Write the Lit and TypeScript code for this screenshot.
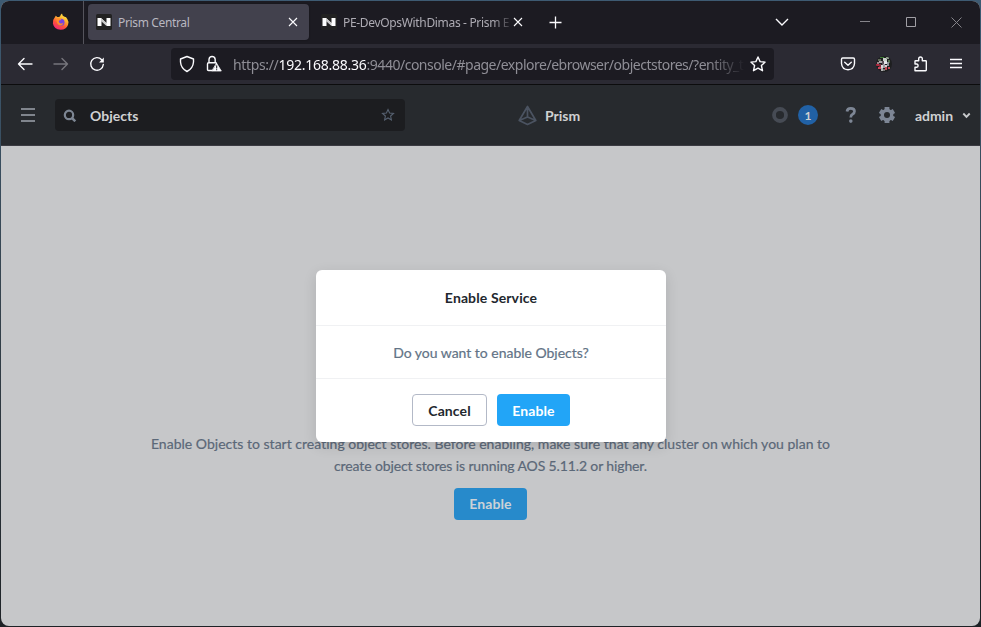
import { LitElement, html, css, svg } from "lit";
import { customElement } from "lit/decorators.js";

const nLogo = html`<svg class="fav" viewBox="0 0 16 16" width="16" height="16"><rect width="16" height="16" rx="1.5" fill="#222"/><path d="M1.5 4H5L10.5 9V4H14.5V12H11L5.500 7V12H1.500Z" fill="#fff"/><path d="M5 4L10.500 9V12L5 7Z" fill="#c9c9c9"/></svg>`;
const closeX = html`<svg class="x" viewBox="0 0 10 10" width="10" height="10"><path d="M1 1L9 9M9 1L1 9" stroke="#fbfbfe" stroke-width="1.1" fill="none"/></svg>`;
const faceDots: [number, number, number, number, string][] = [
  [2, 3, 3, 2, "#5f6a58"], [4, 1, 4, 1, "#3d7a35"], [7, 2, 4, 3, "#c9d0c8"], [10, 1, 3, 2, "#8b9a88"], [12, 4, 2, 3, "#55704c"],
  [1, 6, 2, 2, "#98888c"], [3, 5, 3, 2, "#a9a5a8"], [6, 5, 2, 4, "#5a5058"], [8, 5, 3, 3, "#e3e6e8"], [11, 6, 2, 4, "#8d949a"],
  [0, 8, 3, 2, "#b22840"], [3, 8, 2, 3, "#80303c"], [5, 9, 2, 3, "#d9d9d9"], [7, 8, 2, 4, "#9e9ba0"], [9, 9, 2, 2, "#d6cfd0"],
  [2, 11, 3, 2, "#d0455a"], [5, 12, 2, 3, "#b0b0b0"], [7, 13, 2, 2, "#777"], [9, 11, 2, 3, "#c34a55"], [12, 11, 2, 2, "#c94a55"],
];

@customElement("browser-tabs")
class BrowserTabs extends LitElement {
  static styles = css`
    :host { display: flex; height: 43px; background: #1c1b22; font: 12px "Noto Sans", sans-serif; color: #adabb3; }
    svg { display: block; flex: none; }
    .pin { width: 83px; height: 43px; border-right: 1px solid #55545c; box-sizing: border-box; padding: 12px 0 0 51px; }
    .tab { display: flex; align-items: center; height: 36px; margin-top: 3px; border-radius: 4px; box-sizing: border-box; padding: 0 11px 0 8px; }
    .on { background: #42414d; width: 221px; margin-left: 4px; color: #b9b7c0; box-shadow: 0 0 2px #0006; }
    .off { width: 221px; margin-left: 4px; }
    .title { margin-left: 6px; flex: 1; white-space: nowrap; letter-spacing: -0.35px; }
    .off .title { mask-image: linear-gradient(to right, #000 150px, transparent 171px); letter-spacing: -0.33px; }
    .plus { margin: 15px 0 0 15px; }
    .list { margin: 17px 0 0 213px; }
    .min { margin: 15px 0 0 71px; }
    .max { margin: 16px 0 0 36px; }
    .close { margin: 16px 0 0 35px; }
  `;
  render() {
    return html`
      <div class="pin"><svg width="18" height="18" viewBox="0 0 18 18">
        <defs><linearGradient id="fire" x1=".8" y1="0" x2=".25" y2="1"><stop offset="0" stop-color="#fff44f"/><stop offset=".35" stop-color="#ffb22e"/><stop offset=".65" stop-color="#ff5638"/><stop offset="1" stop-color="#f0207f"/></linearGradient></defs>
        <path d="M3.700 2.700Q4.500 3 5.200 4Q7 4 8 3.500Q8.500 1.600 10 .6Q10.300 3 12 3.600Q14.500 4 15.300 6Q17 8 16 12Q14 17 8.500 16.800Q2 16.300 .9 10.500Q.6 6.500 2.500 4.700Q3 4 3.700 2.700Z" fill="url(#fire)"/>
        <circle cx="9" cy="9.200" r="3.500" fill="#7543e5"/><path d="M4.400 6.200Q7 4.600 9.300 6.200Q8.800 7.300 7 7.600Q6 9 8 10.300Q10.500 11 11.500 9.500Q10.800 12.500 7.800 12.400Q4.500 11.500 4.400 6.200Z" fill="#ff8b2c"/>
      </svg></div>
      <div class="tab on">${nLogo}<span class="title">Prism Central</span>${closeX}</div>
      <div class="tab off">${nLogo}<span class="title">PE-DevOpsWithDimas - Prism E</span>${closeX}</div>
      <svg class="plus" width="13" height="13" viewBox="0 0 13 13"><path d="M6.500 .5V12.500M.5 6.500H12.500" stroke="#fbfbfe" stroke-width="1.3"/></svg>
      <svg class="list" width="14" height="9" viewBox="0 0 14 9"><path d="M1 1L7 7L13 1" stroke="#fbfbfe" stroke-width="1.400" fill="none"/></svg>
      <svg class="min" width="10" height="12" viewBox="0 0 10 12"><path d="M0 5.500H10" stroke="#85848a"/></svg>
      <svg class="max" width="10" height="10" viewBox="0 0 10 10"><path d="M.5 .5H9.500V9.500H.5Z" stroke="#a09fa5" fill="none"/></svg>
      <svg class="close" width="11" height="11" viewBox="0 0 11 11"><path d="M.5 .5L10.500 10.500M10.500 .5L.5 10.500" stroke="#85848a" fill="none"/></svg>
    `;
  }
}

@customElement("browser-toolbar")
class BrowserToolbar extends LitElement {
  static styles = css`
    :host { display: flex; align-items: center; height: 41px; box-sizing: border-box; background: #2b2a33; border-bottom: 1px solid #0c0c0d; }
    svg { display: block; flex: none; fill: none; stroke: #fbfbfe; stroke-width: 1.4; stroke-linecap: round; stroke-linejoin: round; }
    .back { margin-left: 16px; }
    .fwd { margin-left: 20px; stroke: #77767d; }
    .reload { margin-left: 20px; }
    .url { display: flex; align-items: center; margin-left: 66px; width: 603px; height: 32px; border-radius: 4px; background: #1c1b22; box-sizing: border-box; padding: 0 8px; }
    .lock { margin-left: 11px; }
    .addr { margin: 1px 6px 0 11px; flex: 1; min-width: 0; white-space: nowrap; font: 14px "Noto Sans", sans-serif; letter-spacing: -0.49px; color: #8f8e96; mask-image: linear-gradient(to right, #000 475px, transparent 512px); }
    b { font-weight: 400; color: #fbfbfe; letter-spacing: -0.24px; }
    .scheme { letter-spacing: -0.36px; }
    .pocket { margin-left: 66px; }
    .face { margin-left: 20px; stroke: none; }
    .ext { margin-left: 21px; }
    .menu { margin-left: 21px; stroke-linecap: butt; }
  `;
  render() {
    return html`
      <svg class="back" width="16" height="16" viewBox="0 0 16 16"><path d="M15 8H1.500M7 2.500L1.500 8L7 13.500"/></svg>
      <svg class="fwd" width="16" height="16" viewBox="0 0 16 16"><path d="M1 8H14.500M9 2.500L14.500 8L9 13.500"/></svg>
      <svg class="reload" width="16" height="16" viewBox="0 0 16 16"><path d="M12.700 3.700A6.300 6.300 0 1 0 14.300 8.500"/><path d="M14.800 1.600V6.500H10Z" fill="#fbfbfe" stroke="none"/></svg>
      <div class="url">
        <svg width="16" height="18" viewBox="0 0 16 18"><path d="M8 1.500L14.500 4V7Q14 13.500 8 16.500Q2 13.500 1.500 7V4Z"/></svg>
        <svg class="lock" width="16" height="18" viewBox="0 0 16 18"><path d="M6 15.500H2.500Q1.500 15.500 1.500 14.500V9Q1.500 7.800 2.700 7.800H9.500Q10.500 7.800 10.500 8.500M3 7.800V4.500Q3.300 1.500 6 1.500Q9 1.500 9.200 4.500V7.800"/><path d="M10.700 8.500L15.300 16H6.200Z" fill="#fbfbfe" stroke-width=".8"/><path d="M10.700 10.800V13M10.700 14.600V14.700" stroke="#1c1b22" stroke-width="1.100"/></svg>
        <span class="addr"><span class="scheme">https://</span><b>192.168.88.36</b>:9440/console/#page/explore/ebrowser/objectstores/?entity_t</span>
        <svg width="16" height="16" viewBox="0 0 16 16"><path d="M8 1L10.100 5.600L15.100 6.100L11.400 9.500L12.500 14.700L8 12.100L3.500 14.700L4.600 9.500L.9 6.100L5.900 5.600Z"/></svg>
      </div>
      <svg class="pocket" width="16" height="16" viewBox="0 0 16 16"><path d="M2.700 2H13.300Q14.500 2 14.500 3.200V7.500Q14 13.500 8 13.700Q2 13.500 1.500 7.500V3.200Q1.500 2 2.700 2ZM4.700 6.300L8 9.300L11.300 6.300"/></svg>
      <svg class="face" width="16" height="16" viewBox="0 0 16 16"><defs><clipPath id="round"><circle cx="8" cy="8" r="8"/></clipPath></defs><g clip-path="url(#round)"><rect width="16" height="16" fill="#1e1f20"/>${faceDots.map(([x, y, w, h, c]) => svg`<rect x=${x} y=${y} width=${w} height=${h} fill=${c}/>`)}</g></svg>
      <svg class="ext" width="16" height="16" viewBox="0 0 16 16"><path d="M2 14.700V11.300H3.800A1.700 1.700 0 0 0 3.800 8H2V5.300Q2 4.700 2.700 4.700H5.700V2.800A1.800 1.800 0 0 1 9.300 2.800V4.700H12.700Q13.300 4.700 13.300 5.300V14Q13.300 14.700 12.700 14.700Z"/></svg>
      <svg class="menu" width="12" height="16" viewBox="0 0 12 16"><path d="M0 3.500H12M0 7.500H12M0 11.500H12"/></svg>
    `;
  }
}

@customElement("prism-header")
class PrismHeader extends LitElement {
  static styles = css`
    :host { display: flex; align-items: center; height: 61px; box-sizing: border-box; background: #272a2e; border-bottom: 1px solid #3b3b42; color: #d0d1d2; font: 700 14px Lato, sans-serif; }
    svg { display: block; flex: none; }
    .burger { margin-left: 20px; }
    .search { display: flex; align-items: center; width: 350px; height: 32px; margin-left: 20px; border-radius: 4px; background: #1c1d20; box-sizing: border-box; padding: 0 10px 0 8px; }
    .term { flex: 1; margin: 1px 0 1px 13px; letter-spacing: .02px; }
    .logo { margin-left: 113px; }
    .name { margin: 1px 0 1px 8px; width: 36px; }
    .ring { margin-left: 191px; }
    .badge { width: 20px; height: 20px; border-radius: 50%; background: #2161a5; margin-left: 10px; display: grid; place-items: center; font-size: 12px; }
    .help { margin-left: 27px; }
    .gear { margin-left: 21px; }
    .user { margin: 1px 0 1px 19px; width: 40px; letter-spacing: -.05px; }
    .down { margin-left: 7px; }
  `;
  render() {
    return html`
      <svg class="burger" width="14" height="16" viewBox="0 0 14 16"><path d="M0 2H14M0 8H14M0 14H14" stroke="#9fa4ad" stroke-width="1.700"/></svg>
      <div class="search">
        <svg width="14" height="14" viewBox="0 0 14 14"><circle cx="6" cy="6.900" r="4.200" fill="none" stroke="#7c8592" stroke-width="2.200"/><path d="M9 10L12.300 13.300" stroke="#7c8592" stroke-width="2.500"/></svg>
        <span class="term">Objects</span>
        <svg width="14" height="14" viewBox="0 0 14 14"><path d="M7 1.500L8.600 5L12.500 5.400L9.600 8L10.400 12L7 10L3.600 12L4.400 8L1.500 5.400L5.400 5Z" fill="none" stroke="#566170" stroke-width="1.100"/></svg>
      </div>
      <svg class="logo" width="19" height="21" viewBox="0 0 19 21"><path d="M9.500 1.500L1.200 15.500L9.500 19.500L17.800 15.500ZM9.500 1.500V12L1.200 15.500M9.500 12L17.800 15.500" fill="none" stroke="#4b5361" stroke-width="1.700" stroke-linejoin="round"/></svg>
      <span class="name">Prism</span>
      <svg class="ring" width="16" height="16" viewBox="0 0 16 16"><circle cx="8" cy="8" r="6" fill="none" stroke="#464b54" stroke-width="3.800"/></svg>
      <span class="badge">1</span>
      <svg class="help" width="12" height="18" viewBox="0 0 12 18"><path d="M2 5.500Q2.300 2.300 5.800 2.300Q9.500 2.300 9.500 5.200Q9.500 7.200 7.500 8.200Q5.800 9 5.800 11.500" fill="none" stroke="#7d8695" stroke-width="2.700"/><circle cx="5.800" cy="15.100" r="1.800" fill="#7d8695"/></svg>
      <svg class="gear" width="18" height="18" viewBox="0 0 18 18"><g fill="#7d8695"><path d="M6.600 1H11.400V17H6.600Z"/><path d="M6.600 1H11.400V17H6.600Z" transform="rotate(60 9 9)"/><path d="M6.600 1H11.400V17H6.600Z" transform="rotate(120 9 9)"/><circle cx="9" cy="9" r="6.300"/></g><circle cx="9" cy="9" r="3" fill="#272a2e"/></svg>
      <span class="user">admin</span>
      <svg class="down" width="9" height="7" viewBox="0 0 9 7"><path d="M1.300 1.500L4.500 4.800L7.700 1.500" fill="none" stroke="#c8cacc" stroke-width="1.900"/></svg>
    `;
  }
}

@customElement("app-root")
class AppRoot extends LitElement {
  static styles = css`
    :host { display: block; width: 981px; height: 627px; box-sizing: border-box; padding: 1px; overflow: hidden; background: linear-gradient(to bottom, #3e5b73, #34414b 50%, #1d2226); font: 14px Lato, sans-serif; }
    .window { height: 625px; border-radius: 8px; overflow: hidden; display: flex; flex-direction: column; background: #c6c7c9; }
    .page { flex: 1; position: relative; display: flex; flex-direction: column; align-items: center; padding-top: 287px; color: #5b6878; line-height: 22px; white-space: nowrap; -webkit-text-stroke: .2px; }
    .l1 { letter-spacing: .014px; }
    .l2 { letter-spacing: -.126px; }
    .btn { display: grid; place-items: center; box-sizing: border-box; height: 32px; border-radius: 4px; font-weight: 700; padding-top: 1px; letter-spacing: .1px; -webkit-text-stroke: 0; }
    .go { width: 73px; background: #22a5f7; color: #fff; }
    .dim { background: #278acb; color: #cbd2d7; margin-top: 11px; padding-top: 0; }
    .dialog { position: absolute; left: 315px; top: 124px; width: 350px; height: 172px; background: #fff; border-radius: 6px; box-shadow: 0 4px 14px #0000001f; display: flex; flex-direction: column; }
    .head { height: 56px; box-sizing: border-box; border-bottom: 1px solid #f0f1f3; display: grid; place-items: center; font-weight: 700; color: #22272e; padding-top: 1px; letter-spacing: .12px; -webkit-text-stroke: 0; }
    .body { height: 53px; box-sizing: border-box; border-bottom: 1px solid #f0f1f3; display: grid; place-items: center; color: #627386; padding-top: 1px; letter-spacing: -.02px; }
    .foot { display: flex; gap: 10px; justify-content: center; padding-top: 15px; }
    .cancel { width: 75px; border: 1px solid #b3b9c7; color: #22272e; }
  `;
  render() {
    return html`
      <div class="window">
        <browser-tabs></browser-tabs>
        <browser-toolbar></browser-toolbar>
        <prism-header></prism-header>
        <div class="page">
          <div class="l1">Enable Objects to start creating object stores. Before enabling, make sure that any cluster on which you plan to</div>
          <div class="l2">create object stores is running AOS 5.11.2 or higher.</div>
          <div class="btn go dim">Enable</div>
          <div class="dialog">
            <div class="head">Enable Service</div>
            <div class="body">Do you want to enable Objects?</div>
            <div class="foot"><div class="btn cancel">Cancel</div><div class="btn go">Enable</div></div>
          </div>
        </div>
      </div>
    `;
  }
}
